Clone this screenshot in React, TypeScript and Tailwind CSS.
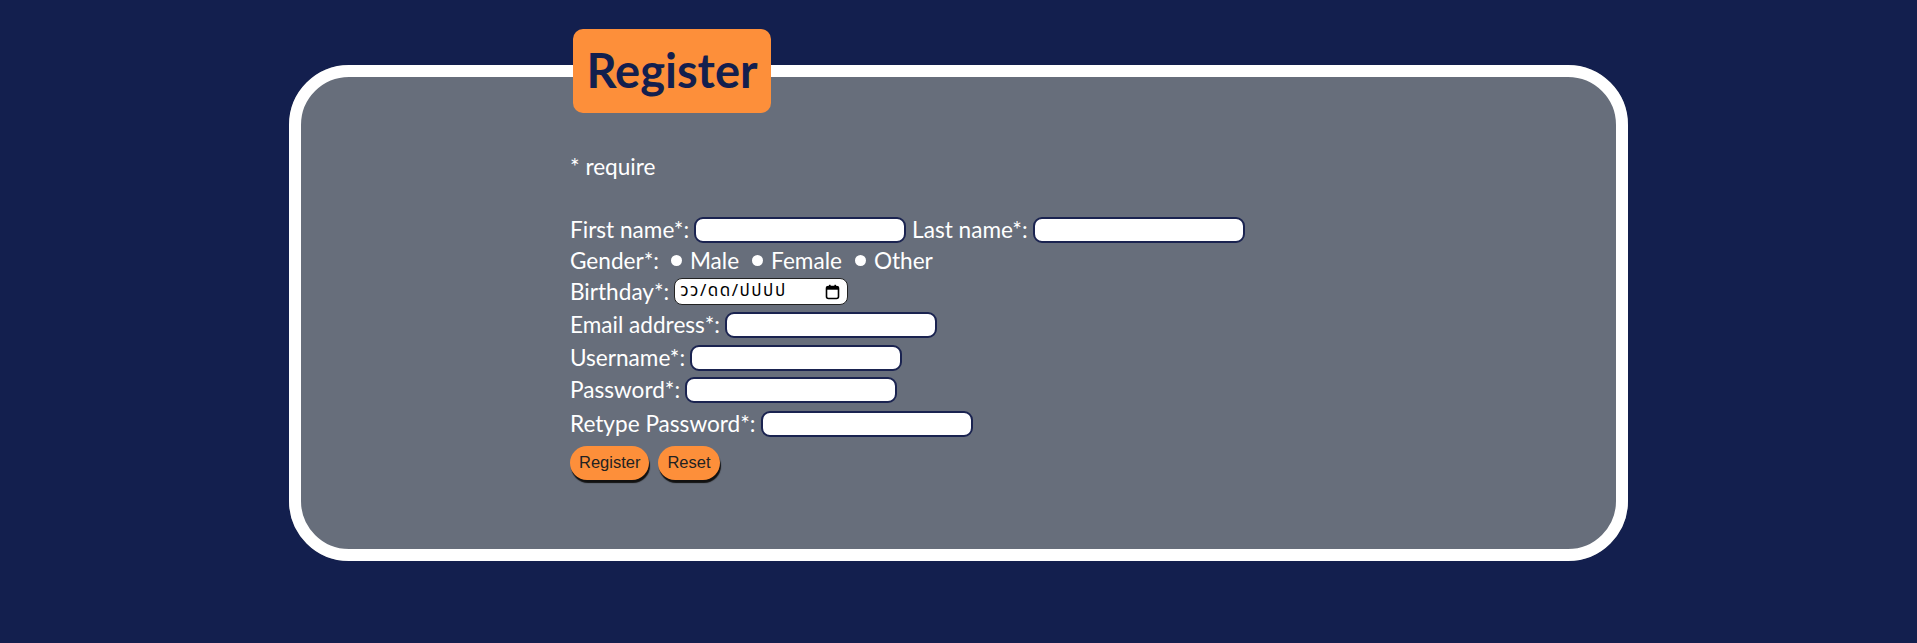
import React from "react";

const inputCls =
  "w-[212px] h-[26px] rounded-[9px] border-2 border-[#1a2350] bg-white outline-none";

function Radio() {
  return <span className="inline-block w-[11px] h-[11px] rounded-full bg-white shrink-0" />;
}

function CalendarIcon() {
  return (
    <svg width="15" height="16" viewBox="0 0 15 16" aria-hidden="true">
      <rect x="1.5" y="2.5" width="12" height="12" rx="2" fill="none" stroke="#000" strokeWidth="1.6" />
      <rect x="1.5" y="2.5" width="12" height="3.2" fill="#000" />
      <rect x="4" y="0.8" width="1.6" height="3" fill="#000" />
      <rect x="9.4" y="0.8" width="1.6" height="3" fill="#000" />
    </svg>
  );
}

export default function App() {
  return (
    <div className="min-h-screen bg-[#131f4e] pt-[29px] font-['Lato','Open_Sans',sans-serif]">
      <form className="w-[1339px] mx-auto" onSubmit={(e) => e.preventDefault()}>
        <fieldset className="border-[12px] border-white rounded-[60px] bg-[#676e7b] pl-[269px] pt-[40px] pb-[65px] text-white text-[22.6px]">
          <legend className="ml-[3px] bg-[#fd8f3a] rounded-[10px] h-[84px] w-[198px] flex items-center justify-center text-[47px] font-bold text-[#131f4e] leading-none">
            <span className="-mt-[2px]">Register</span>
          </legend>

          <div className="h-[28px] flex items-center">* require</div>

          <div className="mt-[33px] h-[31px] flex items-center gap-[5px]">
            <span>First name*:</span>
            <input type="text" className={inputCls} />
            <span className="ml-[1px]">Last name*:</span>
            <input type="text" className={inputCls} />
          </div>

          <div className="h-[31px] flex items-center">
            <span>Gender*:</span>
            <span className="ml-[12px] flex items-center gap-[8px]">
              <Radio />
              <span>Male</span>
            </span>
            <span className="ml-[13px] flex items-center gap-[8px]">
              <Radio />
              <span>Female</span>
            </span>
            <span className="ml-[13px] flex items-center gap-[8px]">
              <Radio />
              <span>Other</span>
            </span>
          </div>

          <div className="h-[31px] flex items-center gap-[5px]">
            <span>Birthday*:</span>
            <div className="w-[174px] h-[27px] rounded-[8px] border border-[#222] bg-white flex items-center justify-between pl-[5px] pr-[7px] text-black text-[17px] tracking-[1.5px] font-['Noto_Sans_Thai','Liberation_Mono',monospace]">
              <span>วว/ดด/ปปปป</span>
              <CalendarIcon />
            </div>
          </div>

          <div className="h-[35px] flex items-center gap-[5px]">
            <span>Email address*:</span>
            <input type="email" className={inputCls} />
          </div>

          <div className="h-[31px] flex items-center gap-[5px]">
            <span>Username*:</span>
            <input type="text" className={inputCls} />
          </div>

          <div className="h-[33px] flex items-center gap-[5px]">
            <span>Password*:</span>
            <input type="password" className={inputCls} />
          </div>

          <div className="h-[35px] flex items-center gap-[5px]">
            <span>Retype Password*:</span>
            <input type="password" className={inputCls} />
          </div>

          <div className="h-[43px] flex items-center gap-[9px]">
            <button
              type="submit"
              className="h-[34px] px-[9px] rounded-full bg-[#fd8f3a] text-[#222] text-[16.5px] font-['Liberation_Sans',Arial,sans-serif] shadow-[1px_3px_1px_#111]"
            >
              Register
            </button>
            <button
              type="reset"
              className="h-[34px] px-[9px] rounded-full bg-[#fd8f3a] text-[#222] text-[16.5px] font-['Liberation_Sans',Arial,sans-serif] shadow-[1px_3px_1px_#111]"
            >
              Reset
            </button>
          </div>
        </fieldset>
      </form>
    </div>
  );
}
